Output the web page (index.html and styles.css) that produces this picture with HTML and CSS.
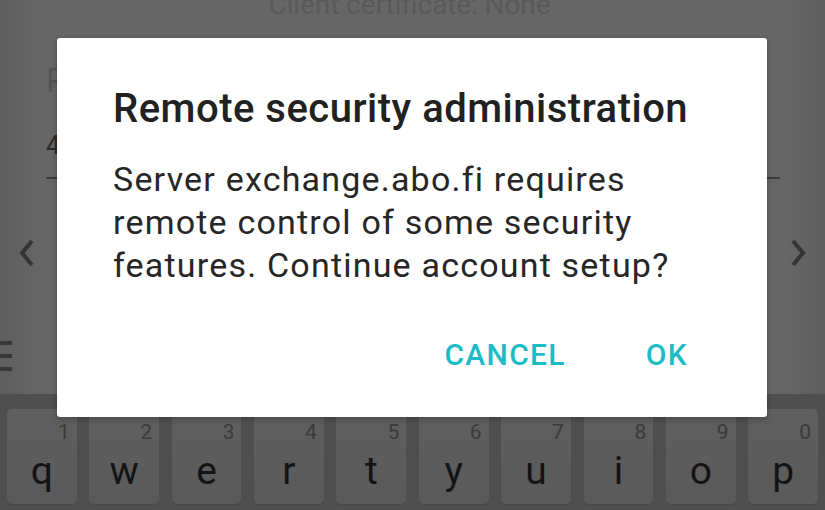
FILE: index.html
```html
<!DOCTYPE html>
<html>
<head>
<meta charset="utf-8">
<link rel="stylesheet" href="styles.css">
</head>
<body>
<div class="screen">
  <div class="form">
    <div class="cert">Client certificate: None</div>
    <div class="field">
      <div class="label">Port</div>
      <div class="value">443</div>
      <div class="line"></div>
    </div>
    <div class="nav">
      <svg class="arrow" width="20" height="30" viewBox="0 0 20 30"><path d="M15 3 L5 15 L15 27" fill="none" stroke="#343434" stroke-width="4"/></svg>
      <svg class="arrow" width="20" height="30" viewBox="0 0 20 30"><path d="M5 3 L15 15 L5 27" fill="none" stroke="#343434" stroke-width="4"/></svg>
    </div>
    <div class="menu">
      <span></span><span></span><span></span>
    </div>
  </div>
  <div class="keyboard">
    <div class="key"><span class="hint">1</span><span class="ch">q</span></div>
    <div class="key"><span class="hint">2</span><span class="ch">w</span></div>
    <div class="key"><span class="hint">3</span><span class="ch">e</span></div>
    <div class="key"><span class="hint">4</span><span class="ch">r</span></div>
    <div class="key"><span class="hint">5</span><span class="ch">t</span></div>
    <div class="key"><span class="hint">6</span><span class="ch">y</span></div>
    <div class="key"><span class="hint">7</span><span class="ch">u</span></div>
    <div class="key"><span class="hint">8</span><span class="ch">i</span></div>
    <div class="key"><span class="hint">9</span><span class="ch">o</span></div>
    <div class="key"><span class="hint">0</span><span class="ch">p</span></div>
  </div>
  <div class="dialog">
    <div class="title">Remote security administration</div>
    <div class="message">Server exchange.abo.fi requires remote control of some security features. Continue account setup?</div>
    <div class="actions">
      <span class="btn">CANCEL</span>
      <span class="btn">OK</span>
    </div>
  </div>
</div>
</body>
</html>
```

FILE: styles.css
```css
* { box-sizing: border-box; }
html, body { margin: 0; padding: 0; }
body {
  width: 825px;
  height: 510px;
  overflow: hidden;
  background: #646464;
  font-family: Roboto, "Noto Sans", sans-serif;
}
.screen {
  position: relative;
  width: 825px;
  height: 510px;
  display: flex;
  flex-direction: column;
  background: linear-gradient(to right, #5e5e5e 0px, #666666 40px, #666666 785px, #5e5e5e 825px);
}
.form {
  flex: 1;
  display: flex;
  flex-direction: column;
}
.cert {
  text-align: center;
  font-size: 28px;
  line-height: 32px;
  margin-top: -11px;
  color: #595959;
  padding-right: 6px;
  letter-spacing: -0.1px;
}
.field {
  padding: 0 45px 0 46px;
}
.label {
  font-size: 33px;
  line-height: 40px;
  margin-top: 40px;
  color: #555555;
}
.value {
  font-size: 25px;
  line-height: 30px;
  margin-top: 30px;
  color: #2a2a2a;
}
.line {
  height: 2px;
  background: #3d3d3d;
  margin-top: 16px;
}
.nav {
  display: flex;
  justify-content: space-between;
  padding: 0 17px 0 17px;
  margin-top: 59px;
}
.arrow { display: block; }
.menu {
  margin-top: 73px;
  display: flex;
  flex-direction: column;
  gap: 9px;
  width: 12px;
}
.menu span {
  display: block;
  height: 4px;
  background: #383838;
}
.keyboard {
  height: 116px;
  background: #4f4f4f;
  padding: 15px 7px 6px 7px;
  display: grid;
  grid-template-columns: repeat(10, 1fr);
  column-gap: 12.6px;
}
.key {
  position: relative;
  background: linear-gradient(#5f5f5f, #5a5a5a);
  border-radius: 5px;
  box-shadow: 0 1px 0 #474747;
}
.hint {
  position: absolute;
  top: 11px;
  right: 7px;
  font-size: 21px;
  line-height: 24px;
  color: #3b3b3b;
}
.ch {
  position: absolute;
  left: 0;
  right: 0;
  top: 42px;
  text-align: center;
  font-size: 39px;
  line-height: 40px;
  color: #141414;
}
.dialog {
  position: absolute;
  left: 57px;
  top: 38px;
  width: 710px;
  height: 379px;
  background: #ffffff;
  border-radius: 3px;
  box-shadow: 0 2px 6px rgba(0,0,0,0.25);
  padding: 48px 56px 0 56px;
}
.title {
  font-size: 40px;
  line-height: 46px;
  font-weight: 500;
  letter-spacing: 0.5px;
  color: #212121;
  white-space: nowrap;
}
.message {
  margin-top: 26px;
  font-size: 34px;
  line-height: 43px;
  letter-spacing: 1.2px;
  color: #262626;
}
.actions {
  margin-top: 50px;
  display: flex;
  justify-content: flex-end;
  gap: 80px;
  padding-right: 23px;
}
.btn {
  font-size: 30px;
  line-height: 36px;
  font-weight: 500;
  letter-spacing: 1.3px;
  color: #1bbcc6;
}
```
